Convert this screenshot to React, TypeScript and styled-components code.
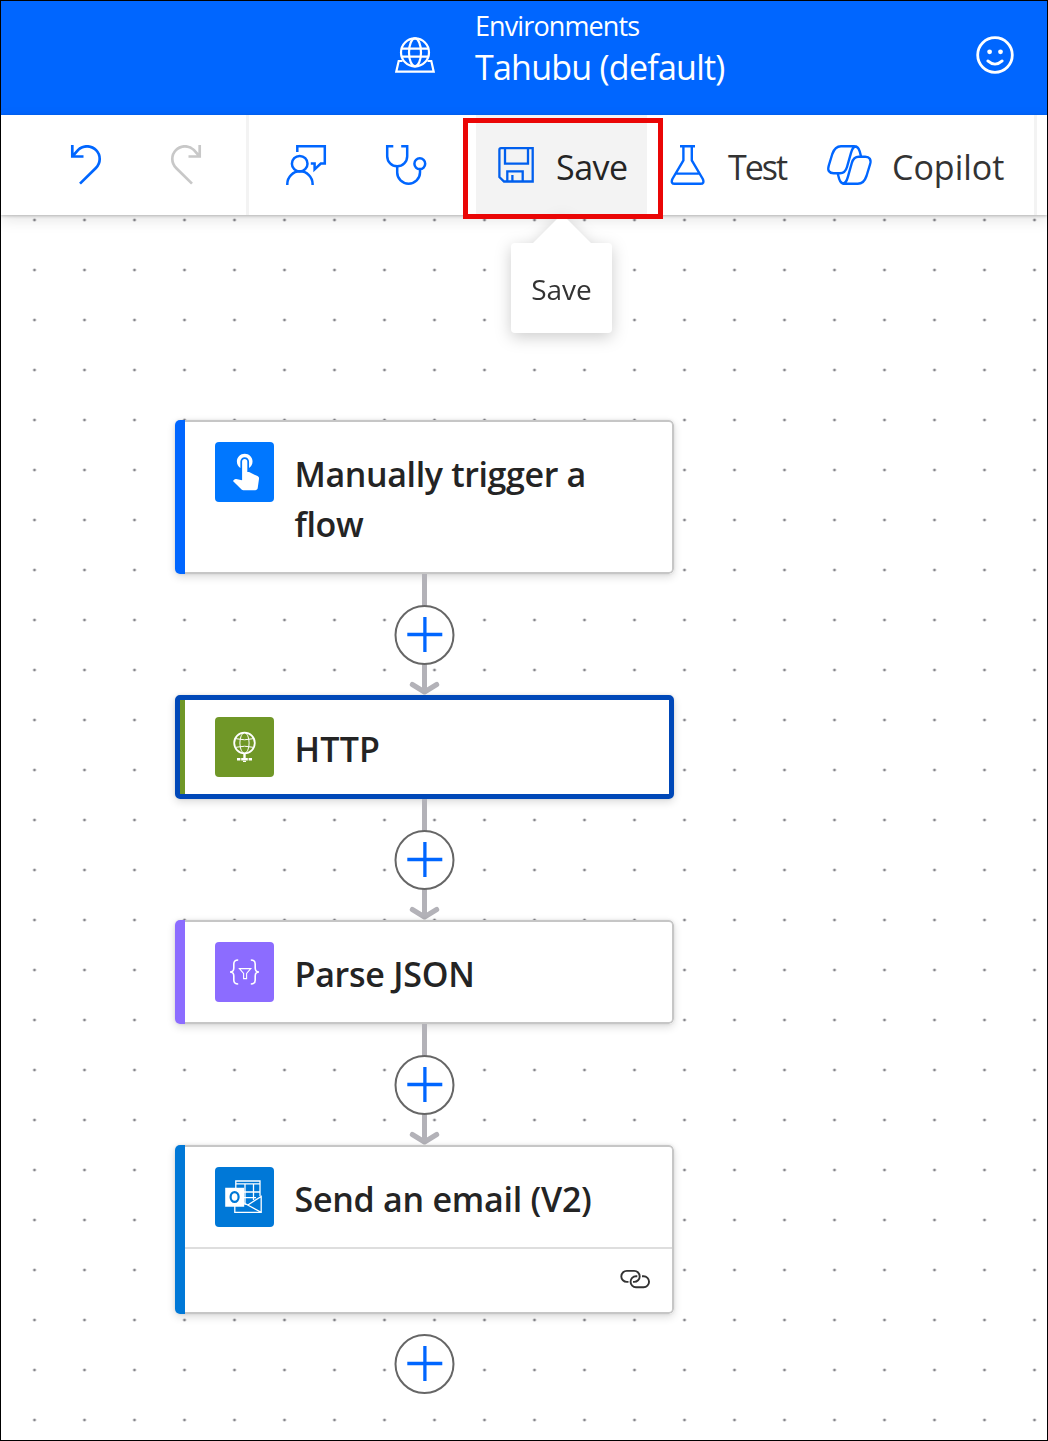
import React from "react";
import styled, { createGlobalStyle } from "styled-components";

const GlobalStyle = createGlobalStyle`
  * { box-sizing: border-box; }
  body { margin: 0; background: #fff; }
`;

const BLUE = "#0066ff";

const Page = styled.div`
  width: 1048px;
  height: 1441px;
  border: 1px solid #000;
  display: flex;
  flex-direction: column;
  overflow: hidden;
  background: #fff;
  font-family: "Open Sans", "Noto Sans", sans-serif;
`;

const Header = styled.header`
  flex: none;
  height: 114px;
  background: ${BLUE};
  color: #fff;
  display: flex;
  align-items: flex-start;
  padding: 0 32px 0 394px;
`;

const HeaderIcon = styled.div<{ $top: number }>`
  display: flex;
  padding-top: ${(p) => p.$top}px;
`;

const Environment = styled.div`
  flex: 1;
  display: flex;
  flex-direction: column;
  padding: 6px 0 0 39px;
`;

const Text = styled.span<{ $size: number; $line: number; $track?: number; $weight?: number }>`
  display: block;
  font-size: ${(p) => p.$size}px;
  line-height: ${(p) => p.$line}px;
  letter-spacing: ${(p) => p.$track ?? 0}px;
  font-weight: ${(p) => p.$weight ?? 400};
  white-space: nowrap;
`;

const Toolbar = styled.nav`
  flex: none;
  position: relative;
  z-index: 2;
  height: 100px;
  display: flex;
  align-items: stretch;
  padding-left: 35px;
  background: #fff;
  box-shadow: 0 1px 3px rgba(0, 0, 0, 0.24), 0 5px 14px rgba(0, 0, 0, 0.1);
`;

const IconButton = styled.button`
  width: 100px;
  padding: 0;
  border: 0;
  background: none;
  display: flex;
  align-items: center;
  justify-content: center;
`;

const Divider = styled.i<{ $left: number; $right?: number }>`
  width: 3px;
  margin: 0 ${(p) => p.$right ?? 0}px 0 ${(p) => p.$left}px;
  background: #f3f3f3;
`;

const Command = styled.button<{ $width: number; $left?: number; $pad?: number; $gap: number; $active?: boolean }>`
  position: relative;
  width: ${(p) => p.$width}px;
  margin-left: ${(p) => p.$left ?? 0}px;
  padding: 0 0 0 ${(p) => p.$pad ?? 0}px;
  border: 0;
  font-family: inherit;
  background: ${(p) => (p.$active ? "#f3f3f3" : "none")};
  color: ${(p) => (p.$active ? "#242424" : "#333")};
  display: flex;
  align-items: center;
  gap: ${(p) => p.$gap}px;
`;

const CommandLabel = styled(Text)`
  padding-top: 4px;
`;

const Highlight = styled.div`
  position: absolute;
  left: -13px;
  top: 3px;
  width: 200px;
  height: 101px;
  border: 5px solid #ea0606;
  z-index: 3;
`;

const Tooltip = styled.div`
  position: absolute;
  left: 35px;
  top: 128px;
  width: 101px;
  height: 90px;
  border-radius: 4px;
  background: #fff;
  color: #333;
  display: flex;
  align-items: center;
  justify-content: center;
  padding-top: 2px;
  filter: drop-shadow(0 4px 8px rgba(0, 0, 0, 0.2));
  &::before {
    content: "";
    position: absolute;
    left: 22px;
    top: -29px;
    width: 58px;
    height: 29px;
    background: #fff;
    clip-path: polygon(50% 0, 100% 100%, 0 100%);
  }
`;

const Canvas = styled.main`
  flex: 1;
  display: flex;
  flex-direction: column;
  padding: 205px 0 0 174px;
  background-image: radial-gradient(circle at center, #85858b 0.8px, rgba(133, 133, 139, 0) 1.9px);
  background-size: 50px 50px;
  background-position: 8.5px -20px;
`;

const Flow = styled.div`
  width: 499px;
  display: flex;
  flex-direction: column;
  align-items: center;
`;

const Card = styled.article<{ $height: number; $accent: string; $selected?: boolean }>`
  width: 100%;
  height: ${(p) => p.$height}px;
  border-radius: 5px;
  overflow: hidden;
  display: flex;
  background: linear-gradient(to right, ${(p) => p.$accent} 20px, #fff 20px);
  border: ${(p) => (p.$selected ? "5px solid #0048b8" : "0 solid")};
  padding-left: ${(p) => (p.$selected ? 4.5 : 9.5)}px;
  box-shadow: 0 3px 8px rgba(0, 0, 0, 0.14), 0 0 3px rgba(0, 0, 0, 0.1);
`;

const CardBody = styled.div<{ $selected?: boolean }>`
  flex: 1;
  background: #fff;
  display: flex;
  flex-direction: column;
  border: ${(p) => (p.$selected ? "0" : "2px")} solid #c6c6c6;
  border-left: 0;
  border-radius: ${(p) => (p.$selected ? "0" : "0 5px 5px 0")};
`;

const CardHead = styled.div<{ $selected?: boolean }>`
  flex: 1;
  display: flex;
  align-items: flex-start;
  gap: 20.5px;
  padding: ${(p) => (p.$selected ? 17 : 20)}px 40px 0 30.5px;
`;

const Tile = styled.div<{ $color: string }>`
  flex: none;
  display: flex;
  width: 59px;
  height: 60px;
  border-radius: 4px;
  background: ${(p) => p.$color};
`;

const TitleBlock = styled.div`
  padding-top: 7px;
  color: #242424;
`;

const CardFooter = styled.div`
  height: 65px;
  border-top: 2px solid #dedede;
  display: flex;
  align-items: center;
  justify-content: flex-end;
  padding: 0 21px 3px 0;
`;

const ConnectorBox = styled.div<{ $gap?: number }>`
  display: flex;
  margin-top: ${(p) => p.$gap ?? 0}px;
`;

const line = (width: number, color = BLUE) => ({ fill: "none", stroke: color, strokeWidth: width });

const EnvironmentIcon = () => (
  <svg width="41" height="38" viewBox="395 36 41 38" {...line(2.2, "#fff")}>
    <circle cx="415" cy="52.4" r="14" />
    <ellipse cx="415" cy="52.4" rx="6" ry="14" />
    <path d="M401.8 48.6H428.2M401.8 56.6H428.2M402.5 61H398.7L396.3 71.6H433.7L431.3 61H427.5" />
  </svg>
);

const SmileIcon = () => (
  <svg width="40" height="40" viewBox="975 35 40 40" {...line(2.8, "#fff")}>
    <circle cx="995" cy="55" r="17.3" />
    <circle cx="989.6" cy="51.8" r="2.4" fill="#fff" stroke="none" />
    <circle cx="1000.5" cy="51.8" r="2.4" fill="#fff" stroke="none" />
    <path d="M987.8 60.9Q995 67.3 1002.2 60.9" strokeLinecap="round" />
  </svg>
);

const UndoIcon = () => (
  <svg width="36" height="40" viewBox="68 145 36 40" {...line(2.7)}>
    <path d="M72.3 145V156.5H83.5M72.3 156.5L78.2 149.9A12.6 12.6 0 0 1 95.9 168L80 183.6" />
  </svg>
);

const RedoIcon = () => (
  <svg width="36" height="40" viewBox="168 145 36 40" {...line(2.7, "#c8c8c8")}>
    <path d="M199.7 145V156.5H188.5M199.7 156.5L193.8 149.9A12.6 12.6 0 0 0 176.1 168L192 183.6" />
  </svg>
);

const FeedbackIcon = () => (
  <svg width="42" height="40" viewBox="285 145 42 40" {...line(2.5)}>
    <path d="M297.3 152V146.2H324.8V163.5H320.8L314.6 169.3V163.5H310.8" />
    <circle cx="299.7" cy="163.7" r="7.8" />
    <path d="M287.3 185V184A12.6 12.6 0 0 1 312.6 184V185" />
  </svg>
);

const CheckerIcon = () => (
  <svg width="42" height="40" viewBox="385 145 42 40" {...line(2.5)}>
    <path d="M393.3 146.2H387.2V156.3A9.9 9.9 0 0 0 407.2 156.3V146.2H401.2" />
    <path d="M397.2 166.3V172.5A11.4 11.2 0 0 0 420 172.5V169.2" />
    <circle cx="419.8" cy="163.7" r="5.4" />
  </svg>
);

const SaveIcon = () => (
  <svg width="36" height="36" viewBox="498 147 36 36" {...line(2.3, "#005fee")}>
    <path d="M501 148.2H532.7V181.5H504L499.4 177V149.8Q499.4 148.2 501 148.2ZM505 148.2V163.6H528V148.2M507.3 181.5V171.3H522.7V181.5M512.4 175V181.5" />
  </svg>
);

const TestIcon = () => (
  <svg width="35" height="40" viewBox="670 145 35 40" {...line(2.4)}>
    <path d="M680 146.2H695M683.4 146.2V160.3L672.4 179Q670.4 183.8 674.8 183.8H700.4Q704.8 183.8 702.8 179L691.8 160.3V146.2M676 173.6H699.4" />
  </svg>
);

const RIBBON =
  "M861.2 157.3C859.8 152 859.5 146.2 854 146.2H841C836.5 146.2 834 149 832.3 154L828.8 165.5C827.2 170.5 829.3 173.3 833.6 173.3H840C844.5 173.3 846 170.5 847 167L851 152.8C852 149 853.2 146.2 856.5 146.2";

const CopilotIcon = () => (
  <svg width="47" height="40" viewBox="826 145 47 40" {...line(2.4)}>
    <path d={RIBBON} />
    <path d={RIBBON} transform="rotate(180 849.4 165)" />
  </svg>
);

const TouchGlyph = () => (
  <svg width="59" height="60" viewBox="0 0 59 60" fill="#fff">
    <path
      transform="translate(9.7 6.5) scale(1.74)"
      d="M9 11.24V7.5C9 6.12 10.12 5 11.5 5S14 6.12 14 7.5v3.74c1.21-.81 2-2.18 2-3.74C16 5.01 13.99 3 11.5 3S7 5.01 7 7.5c0 1.56.79 2.93 2 3.74zm9.84 4.63l-4.54-2.26c-.17-.07-.35-.11-.54-.11H13v-6c0-.83-.67-1.5-1.5-1.5S10 6.67 10 7.5v10.74l-3.43-.72c-.08-.01-.15-.03-.24-.03-.31 0-.59.13-.79.33l-.79.8 4.94 4.94c.27.27.65.44 1.06.44h6.79c.75 0 1.33-.55 1.44-1.28l.75-5.27c.01-.07.02-.14.02-.2 0-.62-.38-1.16-.91-1.38z"
    />
  </svg>
);

const HttpGlyph = () => (
  <svg width="59" height="60" viewBox="0 0 59 60" {...line(1, "#fff")}>
    <circle cx="29.5" cy="26" r="10.3" strokeWidth="1.8" />
    <ellipse cx="29.5" cy="26" rx="4.6" ry="10.3" />
    <path d="M20.2 21.6Q29.5 24 38.8 21.6M20.2 30.4Q29.5 28 38.8 30.4" />
    <path d="M29.5 36.5V41" strokeWidth="2.4" />
    <path d="M22 42.2H25.4M26.2 42.2H32.8M33.6 42.2H37" strokeWidth="2.6" />
    <path d="M28 44.4H31" strokeWidth="1.2" />
  </svg>
);

const ParseGlyph = () => (
  <svg width="59" height="60" viewBox="0 0 59 60" {...line(1.6, "#fff")}>
    <path d="M23.2 18C19.8 18 18.8 19.2 18.8 22V26C18.8 28.6 17.6 30 15 30C17.6 30 18.8 31.4 18.8 34V38C18.8 40.8 19.8 42 23.2 42" />
    <path d="M35.8 18C39.2 18 40.2 19.2 40.2 22V26C40.2 28.6 41.4 30 44 30C41.4 30 40.2 31.4 40.2 34V38C40.2 40.8 39.2 42 35.8 42" />
    <path d="M24.4 26.6H35.8L31.6 31.4V36.6H28.6V31.4Z" strokeWidth="1.1" />
  </svg>
);

const OutlookGlyph = () => (
  <svg width="59" height="60" viewBox="0 0 59 60" {...line(1.3, "#fff")}>
    <path d="M20.8 21V14H45V29M20.8 16.8H45M30 16.8V38M38.5 16.8V33M29 25H45M29 30.6H41M19.8 39V45.3H46.2V29.5L32.5 38.2M29 36L46.2 45.3" />
    <path d="M10.2 20.8H29.2V39.8H10.2Z" fill="#fff" stroke="none" />
    <ellipse cx="19.6" cy="30" rx="4" ry="4.9" stroke="#0078d7" strokeWidth="2.2" />
  </svg>
);

const LinkIcon = () => (
  <svg width="32" height="22" viewBox="619 1268 32 22" {...line(1.9, "#333")}>
    <path d="M628.5 1281.9H626.8A5.4 5.4 0 0 1 626.8 1270.9H634.2A5.4 5.4 0 0 1 634.2 1281.9H633" />
    <path d="M637.3 1276.3H636A5.4 5.4 0 0 0 636 1287.2H643.6A5.4 5.4 0 0 0 643.6 1276.3H642" />
  </svg>
);

const Plus = ({ cy }: { cy: number }) => (
  <>
    <circle cx="30.5" cy={cy} r="29" fill="#fff" stroke="#666" strokeWidth="2" />
    <path d={`M13.3 ${cy - 0.5}H48.3M30.9 ${cy - 18}V${cy + 17}`} stroke={BLUE} strokeWidth="3.3" />
  </>
);

const Connector = () => (
  <ConnectorBox>
    <svg width="61" height="121" viewBox="0 0 61 121" fill="none">
      <path d="M30.5 0V117" stroke="#b3b2b8" strokeWidth="5" />
      <path d="M18.3 110.5L30.5 118L42.7 110.5" stroke="#b3b2b8" strokeWidth="5" strokeLinecap="round" strokeLinejoin="round" />
      <Plus cy={61} />
    </svg>
  </ConnectorBox>
);

type NodeProps = {
  height: number;
  accent: string;
  tile: string;
  glyph: React.ReactNode;
  lines: string[];
  track: number;
  selected?: boolean;
  linked?: boolean;
};

const FlowNode = ({ height, accent, tile, glyph, lines, track, selected, linked }: NodeProps) => (
  <Card $height={height} $accent={accent} $selected={selected}>
    <CardBody $selected={selected}>
      <CardHead $selected={selected}>
        <Tile $color={tile}>{glyph}</Tile>
        <TitleBlock>
          {lines.map((text) => (
            <Text key={text} $size={34} $line={50} $weight={600} $track={track}>
              {text}
            </Text>
          ))}
        </TitleBlock>
      </CardHead>
      {linked && (
        <CardFooter>
          <LinkIcon />
        </CardFooter>
      )}
    </CardBody>
  </Card>
);

export default function App() {
  return (
    <Page>
      <GlobalStyle />
      <Header>
        <HeaderIcon $top={35}>
          <EnvironmentIcon />
        </HeaderIcon>
        <Environment>
          <Text $size={27} $line={38} $track={-0.9}>Environments</Text>
          <Text $size={34} $line={44} $track={-0.75}>Tahubu (default)</Text>
        </Environment>
        <HeaderIcon $top={34}>
          <SmileIcon />
        </HeaderIcon>
      </Header>
      <Toolbar>
        <IconButton aria-label="Undo"><UndoIcon /></IconButton>
        <IconButton aria-label="Redo"><RedoIcon /></IconButton>
        <Divider $left={10} $right={7} />
        <IconButton aria-label="Feedback"><FeedbackIcon /></IconButton>
        <IconButton aria-label="Flow checker"><CheckerIcon /></IconButton>
        <Command $active $left={20} $width={171} $pad={22} $gap={22}>
          <SaveIcon />
          <CommandLabel $size={34} $line={46} $track={-0.5}>Save</CommandLabel>
          <Highlight />
          <Tooltip>
            <Text $size={28} $line={40}>Save</Text>
          </Tooltip>
        </Command>
        <Command $left={23} $width={156} $gap={23}>
          <TestIcon />
          <CommandLabel $size={34} $line={46} $track={-2}>Test</CommandLabel>
        </Command>
        <Command $width={180} $gap={19}>
          <CopilotIcon />
          <CommandLabel $size={34} $line={46}>Copilot</CommandLabel>
        </Command>
        <Divider $left={28} />
      </Toolbar>
      <Canvas>
        <Flow>
          <FlowNode
            height={154}
            accent={BLUE}
            tile="#0077ff"
            glyph={<TouchGlyph />}
            lines={["Manually trigger a", "flow"]}
            track={-0.37}
          />
          <Connector />
          <FlowNode selected height={104} accent="#709727" tile="#709727" glyph={<HttpGlyph />} lines={["HTTP"]} track={0.2} />
          <Connector />
          <FlowNode height={104} accent="#8c6cff" tile="#8c6cff" glyph={<ParseGlyph />} lines={["Parse JSON"]} track={-0.25} />
          <Connector />
          <FlowNode
            linked
            height={169}
            accent="#0078d7"
            tile="#0078d7"
            glyph={<OutlookGlyph />}
            lines={["Send an email (V2)"]}
            track={-0.26}
          />
          <ConnectorBox $gap={19}>
            <svg width="61" height="62" viewBox="0 0 61 62" fill="none">
              <Plus cy={31} />
            </svg>
          </ConnectorBox>
        </Flow>
      </Canvas>
    </Page>
  );
}
